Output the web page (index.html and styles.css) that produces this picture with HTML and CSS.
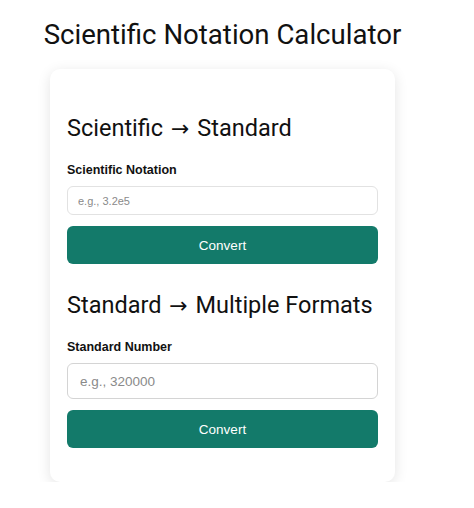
FILE: index.html
```html
<!DOCTYPE html>
<html>
<head>
<meta charset="utf-8">
<link rel="stylesheet" href="styles.css">
</head>
<body>
<div class="page">
  <h1 class="title">Scientific Notation Calculator</h1>
  <div class="card">
    <section class="section">
      <h2 class="heading">Scientific <span class="arrow">→</span> Standard</h2>
      <label class="label">Scientific Notation</label>
      <input class="input input-sm" type="text" placeholder="e.g., 3.2e5">
      <button class="btn">Convert</button>
    </section>
    <section class="section section-2">
      <h2 class="heading">Standard <span class="arrow">→</span> Multiple Formats</h2>
      <label class="label">Standard Number</label>
      <input class="input input-lg" type="text" placeholder="e.g., 320000">
      <button class="btn">Convert</button>
    </section>
  </div>
</div>
</body>
</html>
```
FILE: styles.css
```css
* { box-sizing: border-box; }
html, body { margin: 0; padding: 0; background: #ffffff; }
body { font-family: Roboto, "Noto Sans", sans-serif; color: #111; }
.page {
  width: 445px;
  display: flex;
  flex-direction: column;
  align-items: center;
  padding-top: 17px;
}
.title {
  margin: 0;
  font-weight: 400;
  font-size: 27.6px;
  line-height: 36px;
  color: #111;
}
.card {
  margin-top: 16px;
  width: 345px;
  background: #fff;
  border-radius: 10px;
  box-shadow: 0 3px 14px rgba(0,0,0,0.11);
  padding: 44px 17px 34px 17px;
  display: flex;
  flex-direction: column;
}
.section { display: flex; flex-direction: column; }
.section-2 { margin-top: 26px; }
.heading {
  margin: 0 0 20px 0;
  font-weight: 400;
  font-size: 23.5px;
  line-height: 30px;
  height: 30px;
  color: #111;
}
.arrow {
  font-family: "DejaVu Sans", sans-serif;
  font-size: 22px;
  line-height: 1;
  margin: 0 2px;
}
.label {
  font-family: "Liberation Sans", Arial, sans-serif;
  font-weight: 700;
  font-size: 12.5px;
  line-height: 15px;
  margin-bottom: 8px;
  color: #111;
}
.input {
  width: 100%;
  border: 1px solid #e2e2e2;
  border-radius: 6px;
  font-family: "Liberation Sans", Arial, sans-serif;
  color: #333;
  background: #fff;
  outline: none;
}
.input::placeholder { color: #8a8a8a; }
.input-sm { height: 29px; font-size: 11px; padding: 0 10px; }
.input-lg { height: 36px; font-size: 13.5px; padding: 0 12px; border-color: #d4d4d4; }
.btn {
  margin-top: 11px;
  width: 100%;
  height: 38px;
  border: none;
  border-radius: 6px;
  background: #137a6a;
  color: #fff;
  font-family: "Liberation Sans", Arial, sans-serif;
  font-size: 13.5px;
}
```
